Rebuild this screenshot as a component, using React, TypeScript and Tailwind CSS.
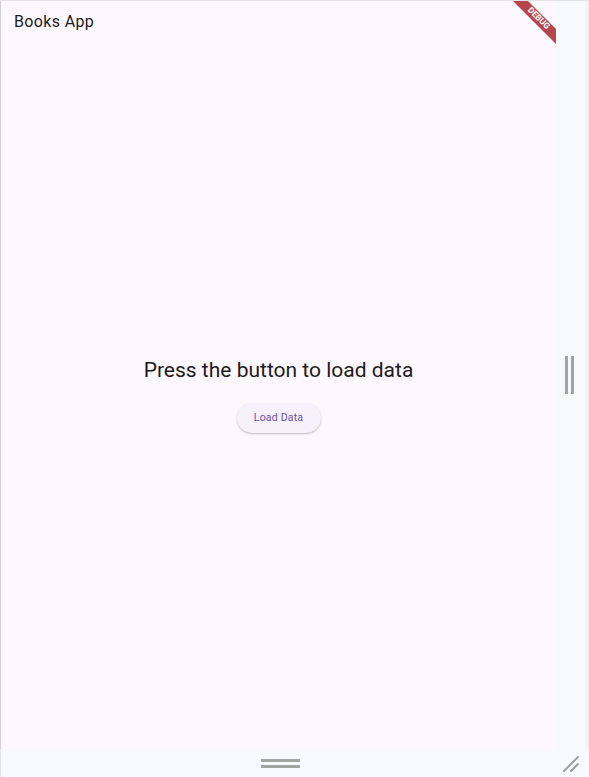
export default function App() {
  return (
    <div
      className="w-[589px] h-[777px] bg-[#f7f9fd] flex flex-col overflow-hidden"
      style={{ fontFamily: 'Roboto, "Noto Sans", sans-serif' }}
    >
      <div className="flex flex-1 min-h-0 border-t border-[#e3e3e6]">
        {/* app surface */}
        <div className="relative w-[556px] h-full bg-[#fdf7fe] border-l border-[#cfcfd4] flex flex-col">
          <div className="h-[42px] flex items-center pl-[13px] text-[16px] tracking-[0.35px] text-[#1d1b20]">Books App</div>
          <div className="flex-1 flex flex-col items-center justify-center pb-[3px]">
            <p className="text-[21px] leading-[28px] text-[#1d1b20]">Press the button to load data</p>
            <button className="mt-[19px] h-[30px] w-[84px] rounded-full bg-[#f7f1fb] text-[10.5px] tracking-[0.2px] text-[#6750a4] shadow-[0_1px_2px_rgba(0,0,0,0.25)]">
              Load Data
            </button>
          </div>

          {/* debug banner */}
          <svg className="absolute top-0 right-0" width="43" height="44" viewBox="0 0 43 44">
            <polygon points="0,0 15,0 43,28 43,43" fill="#b5474c" />
            <text
              x="0"
              y="0"
              transform="translate(25.5 17.5) rotate(45)"
              textAnchor="middle"
              dominantBaseline="middle"
              fontSize="8.5"
              fontWeight="bold"
              fill="#ffffff"
              fontFamily="Roboto, sans-serif"
            >
              DEBUG
            </text>
          </svg>
        </div>

        {/* right drag strip */}
        <div className="flex-1 flex items-center justify-start pl-[9px] border-r-[3px] border-[#eef1f8]">
          <div className="flex gap-[3px]">
            <div className="w-[3px] h-[38px] bg-[#a3a3a3]" />
            <div className="w-[3px] h-[38px] bg-[#a3a3a3]" />
          </div>
        </div>
      </div>

      {/* bottom drag strip */}
      <div className="relative h-[28px] flex flex-col items-center justify-center gap-[3px] pr-[30px] border-l border-[#e3e3e6]">
        <div className="w-[39px] h-[3px] bg-[#a3a3a3]" />
        <div className="w-[39px] h-[3px] bg-[#a3a3a3]" />
        <svg className="absolute right-[9px] bottom-[4px]" width="18" height="18" viewBox="0 0 18 18">
          <line x1="2" y1="16" x2="16" y2="2" stroke="#a0a0a0" strokeWidth="2" strokeLinecap="round" />
          <line x1="9" y1="16" x2="16" y2="9" stroke="#a0a0a0" strokeWidth="2" strokeLinecap="round" />
        </svg>
      </div>
    </div>
  )
}
